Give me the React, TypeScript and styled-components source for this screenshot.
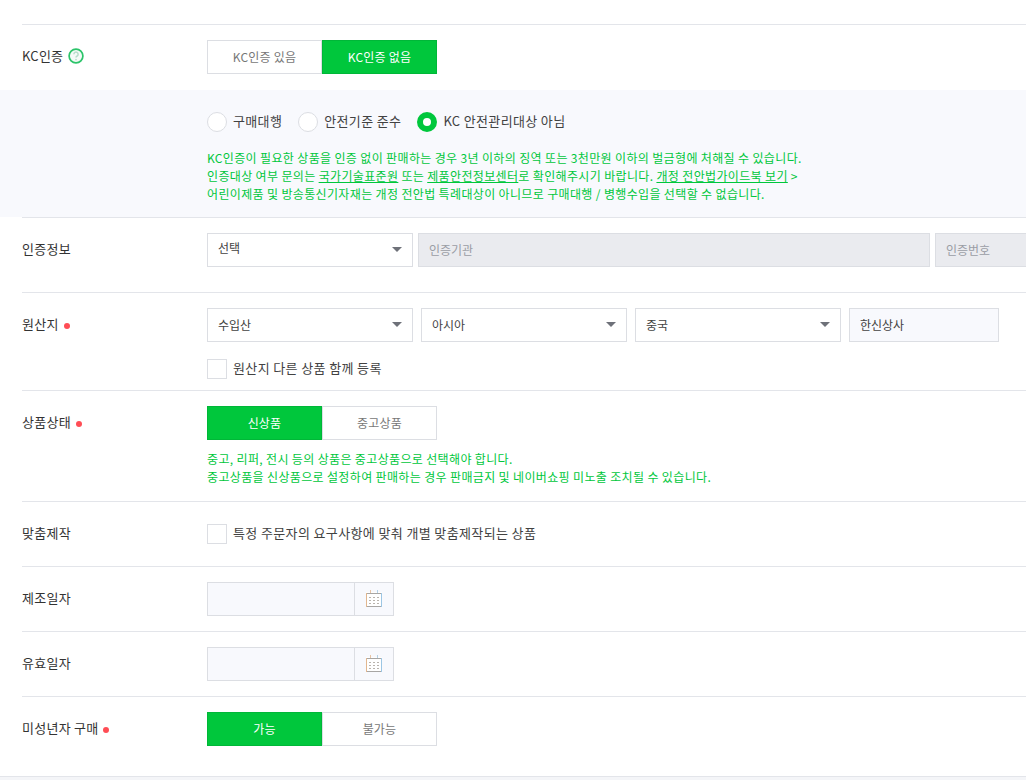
import React from 'react';
import styled, { createGlobalStyle } from 'styled-components';

const GREEN = '#00c73c';
const LINE = '#e3e5ea';
const BOX = '#dcdee3';
const FONT = '"Noto Sans CJK KR", "Noto Sans", sans-serif';

const GlobalStyle = createGlobalStyle`
	html, body {
		margin: 0;
		padding: 0;
		background: #fff;
		overflow: hidden;
	}
	body {
		font-family: ${FONT};
		font-size: 13px;
		color: #424242;
	}
	* {
		box-sizing: border-box;
	}
`;

const Page = styled.div`
	width: 1026px;
	height: 780px;
	padding: 24px 0 0 22px;
	overflow: hidden;
`;
const Row = styled.section<{ $bottom?: number }>`
	display: flex;
	align-items: flex-start;
	border-top: 1px solid ${LINE};
	padding: 15px 0 ${(p) => p.$bottom ?? 15}px;
`;
const Label = styled.div`
	flex: 0 0 185px;
	display: flex;
	align-items: center;
	gap: 5px;
	height: 34px;
	padding-bottom: 2px;
	color: #333;
	letter-spacing: 0.25px;
	line-height: 32px;
`;
const Required = styled.i`
	flex: none;
	width: 6px;
	height: 6px;
	margin-top: 3px;
	border-radius: 50%;
	background: #ff4d55;
`;
const Body = styled.div`
	flex: 1;
	min-width: 0;
`;
const Controls = styled.div<{ $gap?: number }>`
	display: flex;
	gap: ${(p) => p.$gap ?? 8}px;
`;
const Toggle = styled.div`
	display: flex;
	width: 230px;
	height: 34px;
`;
const ToggleButton = styled.button<{ $on?: boolean }>`
	flex: 1;
	height: 34px;
	padding: 0;
	border: 1px solid ${(p) => (p.$on ? '#00b738' : BOX)};
	background: ${(p) => (p.$on ? GREEN : '#fff')};
	color: ${(p) => (p.$on ? '#fff' : '#777')};
	font: 12px/32px ${FONT};
	letter-spacing: 0.2px;
`;
const Select = styled.div<{ $raised?: boolean }>`
	position: relative;
	flex: none;
	width: 206px;
	height: 34px;
	padding-left: 10px;
	border: 1px solid ${BOX};
	background: #fff;
	line-height: ${(p) => (p.$raised ? 28 : 32)}px;
	font-size: 12px;
	&::after {
		content: '';
		position: absolute;
		right: 10px;
		top: 13px;
		border-style: solid;
		border-width: 5px 5px 0;
		border-color: #6e7179 transparent transparent;
	}
`;
const Field = styled.div<{ $width: number; $off?: boolean }>`
	flex: none;
	width: ${(p) => p.$width}px;
	height: 34px;
	padding-left: 10px;
	border: 1px solid ${BOX};
	background: ${(p) => (p.$off ? '#eaebef' : '#f8f9fd')};
	color: ${(p) => (p.$off ? '#9a9da5' : '#424242')};
	line-height: 32px;
	font-size: 12px;
`;
const Band = styled.div`
	height: 127px;
	margin-left: -22px;
	padding: 22px 0 0 207px;
	background: #f8f9fd;
`;
const Radios = styled.div`
	display: flex;
	height: 20px;
	gap: 16px;
`;
const RadioItem = styled.label`
	display: flex;
	align-items: center;
	gap: 6px;
	letter-spacing: 0.35px;
	line-height: 20px;
`;
const RadioDot = styled.span<{ $on?: boolean }>`
	flex: none;
	width: 20px;
	height: 20px;
	border-radius: 50%;
	background: #fff;
	border: ${(p) => (p.$on ? `6px solid ${GREEN}` : `1px solid ${BOX}`)};
`;
const OptionText = styled.span<{ $lift: number }>`
	padding-bottom: ${(p) => p.$lift}px;
`;
const Notice = styled.p<{ $top: number }>`
	margin: ${(p) => p.$top}px 0 0;
	color: ${GREEN};
	font-size: 12px;
	letter-spacing: 0.35px;
	line-height: 18px;
	a {
		color: inherit;
		text-decoration: underline;
	}
`;
const CheckRow = styled.label<{ $top?: number }>`
	display: flex;
	align-items: center;
	gap: 6px;
	height: 20px;
	margin-top: ${(p) => p.$top ?? 0}px;
	letter-spacing: 0.37px;
`;
const CheckBox = styled.span`
	flex: none;
	width: 20px;
	height: 20px;
	border: 1px solid ${BOX};
	background: #fff;
`;
const DatePicker = styled.div`
	display: flex;
	width: 187px;
	height: 34px;
	border: 1px solid ${BOX};
	background: #f8f9fd;
`;
const DateValue = styled.div`
	flex: 1;
	border-right: 1px solid ${BOX};
`;
const DateIcon = styled.div`
	flex: 0 0 38px;
	display: flex;
	align-items: center;
	justify-content: center;
	padding-bottom: 2px;
`;
const Foot = styled.div`
	height: 20px;
	margin-left: -22px;
	border-top: 1px solid ${LINE};
	background: #f4f5f8;
`;

const HelpIcon = () => (
	<svg width="16" height="16" viewBox="0 0 16 16" fill="none" aria-hidden="true">
		<circle cx="8" cy="8" r="6.9" fill="#f4faf7" stroke="#2cc46a" strokeWidth="1.7" />
		<path d="M5.9 6.2a2.1 2.1 0 1 1 3.2 1.8c-.7.4-1.1.8-1.1 1.6" stroke="#b7dccb" strokeWidth="1.5" />
		<circle cx="8" cy="11.6" r=".9" fill="#b7dccb" />
	</svg>
);

const CalendarIcon = () => (
	<svg width="16" height="17" viewBox="0 0 16 17" fill="none" aria-hidden="true">
		<rect x="0" y="2" width="16" height="15" fill="#fff" />
		<path d="M1 3.5h14M1 16.5h14" stroke="#a8a6a4" />
		<path d="M.5 3v14" stroke="#e2b78f" />
		<path d="M15.5 3v14" stroke="#9cc6e4" />
		<path d="M4.5 0v3" stroke="#e8c4a4" />
		<path d="M11.5 0v3" stroke="#b4d2e8" />
		<path d="M3 7.5h2M7 7.5h2M11 7.5h2M3 10.5h2M7 10.5h2M11 10.5h2M3 13.5h2M7 13.5h2M11 13.5h2" stroke="#b9b3ad" />
	</svg>
);

const Radio = ({ on, children }: { on?: boolean; children: React.ReactNode }) => (
	<RadioItem>
		<RadioDot $on={on} />
		<OptionText $lift={2}>{children}</OptionText>
	</RadioItem>
);

const Check = ({ top, children }: { top?: number; children: React.ReactNode }) => (
	<CheckRow $top={top}>
		<CheckBox />
		<OptionText $lift={3}>{children}</OptionText>
	</CheckRow>
);

const DateField = () => (
	<DatePicker>
		<DateValue />
		<DateIcon>
			<CalendarIcon />
		</DateIcon>
	</DatePicker>
);

const App = () => {
	return (
		<Page>
			<GlobalStyle />
			<Row $bottom={16}>
				<Label>
					KC인증 <HelpIcon />
				</Label>
				<Body>
					<Toggle>
						<ToggleButton>KC인증 있음</ToggleButton>
						<ToggleButton $on>KC인증 없음</ToggleButton>
					</Toggle>
				</Body>
			</Row>
			<Band>
				<Radios>
					<Radio>구매대행</Radio>
					<Radio>안전기준 준수</Radio>
					<Radio on>KC 안전관리대상 아님</Radio>
				</Radios>
				<Notice $top={17}>
					KC인증이 필요한 상품을 인증 없이 판매하는 경우 3년 이하의 징역 또는 3천만원 이하의 벌금형에 처해질 수 있습니다.
					<br />
					인증대상 여부 문의는 <a>국가기술표준원</a> 또는 <a>제품안전정보센터</a>로 확인해주시기 바랍니다. <a>개정 전안법가이드북 보기</a> &gt;
					<br />
					어린이제품 및 방송통신기자재는 개정 전안법 특례대상이 아니므로 구매대행 / 병행수입을 선택할 수 없습니다.
				</Notice>
			</Band>
			<Row $bottom={25}>
				<Label>인증정보</Label>
				<Body>
					<Controls $gap={5}>
						<Select $raised>선택</Select>
						<Field $off $width={512}>인증기관</Field>
						<Field $off $width={120}>인증번호</Field>
					</Controls>
				</Body>
			</Row>
			<Row $bottom={11}>
				<Label>
					원산지 <Required />
				</Label>
				<Body>
					<Controls>
						<Select>수입산</Select>
						<Select>아시아</Select>
						<Select>중국</Select>
						<Field $width={150}>한신상사</Field>
					</Controls>
					<Check top={17}>원산지 다른 상품 함께 등록</Check>
				</Body>
			</Row>
			<Row>
				<Label>
					상품상태 <Required />
				</Label>
				<Body>
					<Toggle>
						<ToggleButton $on>신상품</ToggleButton>
						<ToggleButton>중고상품</ToggleButton>
					</Toggle>
					<Notice $top={10}>
						중고, 리퍼, 전시 등의 상품은 중고상품으로 선택해야 합니다.
						<br />
						중고상품을 신상품으로 설정하여 판매하는 경우 판매금지 및 네이버쇼핑 미노출 조치될 수 있습니다.
					</Notice>
				</Body>
			</Row>
			<Row>
				<Label>맞춤제작</Label>
				<Body>
					<Check top={7}>특정 주문자의 요구사항에 맞춰 개별 맞춤제작되는 상품</Check>
				</Body>
			</Row>
			<Row>
				<Label>제조일자</Label>
				<Body>
					<DateField />
				</Body>
			</Row>
			<Row>
				<Label>유효일자</Label>
				<Body>
					<DateField />
				</Body>
			</Row>
			<Row $bottom={30}>
				<Label>
					미성년자 구매 <Required />
				</Label>
				<Body>
					<Toggle>
						<ToggleButton $on>가능</ToggleButton>
						<ToggleButton>불가능</ToggleButton>
					</Toggle>
				</Body>
			</Row>
			<Foot />
		</Page>
	);
};

export default App;
